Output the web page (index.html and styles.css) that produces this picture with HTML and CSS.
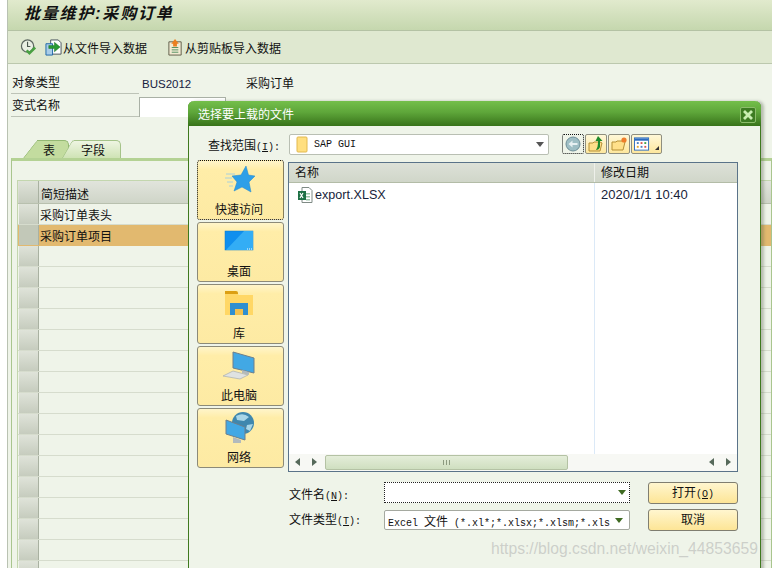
FILE: index.html
```html
<!DOCTYPE html>
<html lang="zh">
<head>
<meta charset="utf-8">
<title>批量维护:采购订单</title>
<link rel="stylesheet" href="styles.css">
</head>
<body>
<div class="app">
  <div class="titlebar">批量维护:采购订单</div>
  <div class="toolbar">
    <svg class="ico first" viewBox="0 0 18 18"><circle cx="8" cy="7.500" r="6.500" fill="#e9efe3" stroke="#5c6660" stroke-width="1.300"/><path d="M8 3v5h3" fill="none" stroke="#4c5750" stroke-width="1.200"/><path d="M7 12l3 3 6-6" fill="none" stroke="#4aa043" stroke-width="2.800"/></svg>
    <svg class="ico" viewBox="0 0 18 18"><path d="M6 1h8l3 3v12H6z" fill="#fff" stroke="#46525c"/><path d="M1 5h7v12H1z" fill="#a9cde8" stroke="#1f66a8"/><path d="M4 7h6V3.500l6 5-6 5V10H4z" fill="#2a9a35" stroke="#1c6e24" stroke-width=".5"/></svg>
    <span class="tool-label">从文件导入数据</span>
    <svg class="ico second" viewBox="0 0 18 18"><path d="M2 3h13v14H2z" fill="#f2ead2" stroke="#5f5c48"/><path d="M5 9h7M5 11.500h7M5 14h7" stroke="#4f8f5f"/><path d="M8.500 0l4 5h-2v3h-4V5h-2z" fill="#ea7f1f"/></svg>
    <span class="tool-label">从剪贴板导入数据</span>
  </div>
  <div class="fields">
    <div class="field-row">
      <span class="field-label underline">对象类型</span>
      <span class="field-code">BUS2012</span>
      <span class="field-text">采购订单</span>
    </div>
    <div class="field-row second-row">
      <span class="field-label underline">变式名称</span>
      <span class="field-input"></span>
    </div>
  </div>
  <div class="tabs">
    <span class="tab active">表</span>
    <span class="tab plain">字段</span>
  </div>
  <div class="tabpanel">
    <div class="grid">
      <div class="grow ghead"><span class="sel"></span><span class="cell">简短描述</span></div>
      <div class="grow"><span class="sel"></span><span class="cell tight">采购订单表头</span></div>
      <div class="grow picked"><span class="sel"></span><span class="cell tight">采购订单项目</span></div>
      <div class="grow"><span class="sel"></span><span class="cell"></span></div>
      <div class="grow"><span class="sel"></span><span class="cell"></span></div>
      <div class="grow"><span class="sel"></span><span class="cell"></span></div>
      <div class="grow"><span class="sel"></span><span class="cell"></span></div>
      <div class="grow"><span class="sel"></span><span class="cell"></span></div>
      <div class="grow"><span class="sel"></span><span class="cell"></span></div>
      <div class="grow"><span class="sel"></span><span class="cell"></span></div>
      <div class="grow"><span class="sel"></span><span class="cell"></span></div>
      <div class="grow"><span class="sel"></span><span class="cell"></span></div>
      <div class="grow"><span class="sel"></span><span class="cell"></span></div>
      <div class="grow"><span class="sel"></span><span class="cell"></span></div>
      <div class="grow"><span class="sel"></span><span class="cell"></span></div>
      <div class="grow"><span class="sel"></span><span class="cell"></span></div>
      <div class="grow"><span class="sel"></span><span class="cell"></span></div>
      <div class="grow"><span class="sel"></span><span class="cell"></span></div>
      <div class="grow"><span class="sel"></span><span class="cell"></span></div>
    </div>
  </div>
</div>

<section class="dialog">
  <header class="dlg-title">
    <span>选择要上载的文件</span>
    <span class="dlg-close"><svg viewBox="0 0 12 12"><path d="M2 2l8 8M10 2l-8 8" stroke="#c8eeb0" stroke-width="2.800"/></svg></span>
  </header>
  <div class="lookin">
    <span class="lookin-label">查找范围<span class="asc">(<u>I</u>):</span></span>
    <span class="lookin-box">
      <svg class="folder" viewBox="0 0 13 17"><path d="M1 2q0-1 1-1h8q1 0 1 1v13q0 1-1 1H2q-1 0-1-1z" fill="#ffdf80" stroke="#e2b94f"/></svg>
      <span class="mono">SAP GUI</span>
      <span class="arrow dark"></span>
    </span>
    <span class="nav-btns">
      <span class="nav focus"><svg viewBox="0 0 16 16"><circle cx="8" cy="8" r="7" fill="#9ebec4" stroke="#6f8f98"/><path d="M3.500 8l4-3.500V7h5v2h-5v2.500z" fill="#e7f0f2"/></svg></span>
      <span class="nav"><svg viewBox="0 0 16 16"><path d="M1 7h4l1-1h6l2 1-2 8H1z" fill="#ffe08a" stroke="#b58f35"/><path d="M10 0l4.500 5H12v6q-1 3-4 3 2-3 2-7V5H7.500z" fill="#1f8a2b"/></svg></span>
      <span class="nav"><svg viewBox="0 0 16 16"><path d="M1 6h4l1-1h6l2 1-2 8H1z" fill="#ffe08a" stroke="#b58f35"/><circle cx="13" cy="4" r="2.600" fill="#ef7d2a"/></svg></span>
      <span class="nav wide"><svg viewBox="0 0 17 16"><rect x=".5" y="1.500" width="15" height="13" fill="#fff" stroke="#2b6cc0"/><rect x="1" y="2" width="14" height="2.500" fill="#2b6cc0"/><path d="M3 6h2v2H3z" fill="#4a7fc0"/><path d="M7 6h2v2H7z" fill="#d9534f"/><path d="M11 6h2v2h-2z" fill="#46a046"/><path d="M3 10h2v2H3z" fill="#e3a92f"/><path d="M7 10h2v2H7z" fill="#4a7fc0"/><path d="M11 10h2v2h-2z" fill="#d9534f"/></svg><i class="corner"></i></span>
    </span>
  </div>
  <div class="dlg-main">
    <nav class="places">
      <div class="place focus">
        <svg viewBox="0 0 30 30"><path d="M1 9h9M0 13h7M2 17h6M4 21h4" stroke="#a8d0dc"/><path d="M21 1l2.500 9 6.500 1-6 6 2 10-9-5-8 4 3-9-5-6 9-1z" fill="#2e9fe8" stroke="#1d86cf" stroke-width=".5"/></svg>
        <span>快速访问</span>
      </div>
      <div class="place">
        <svg viewBox="0 0 30 30"><rect x="0" y="4" width="28" height="19" fill="#0f8fee" stroke="#0b78ca" stroke-width=".5"/><path d="M1 23L19 4h9v19z" fill="#33adf5"/><path d="M22 22h1M24 22h1M26 22h1" stroke="#fff"/></svg>
        <span>桌面</span>
      </div>
      <div class="place">
        <svg viewBox="0 0 30 30"><path d="M0 4h11l3 2h14v20H0z" fill="#ffd765"/><path d="M0 2h11q2 0 2 2v1H0z" fill="#dc9f12"/><path d="M5 26V14h18v12h-5v-6h-8v6z" fill="#2f8fd0"/><path d="M10 20h8v6h-8z" fill="#f3c14c"/></svg>
        <span>库</span>
      </div>
      <div class="place">
        <svg class="free" viewBox="0 0 30 30"><path d="M8 1l21 6v15L8 17z" fill="#42a8e4" stroke="#6d7f8c"/><path d="M17 19l7 2v3l-7-2z" fill="#b2babd"/><path d="M-2 25l10-5 15 4-8 4z" fill="#dfe2e2" stroke="#a8aeb0" stroke-width=".7"/></svg>
        <span>此电脑</span>
      </div>
      <div class="place">
        <svg class="free" viewBox="0 0 30 30"><circle cx="18" cy="10" r="11" fill="#3f87ae"/><path d="M11 3q7-4 13 1l-5 4-7-1zM22 12l6-1-3 7-4-2z" fill="#a9d6e8"/><path d="M1 7l19 7v13L1 21z" fill="#42a8e4" stroke="#6d7f8c"/><path d="M8 24l8 3v3H8z" fill="#b2babd"/></svg>
        <span>网络</span>
      </div>
    </nav>
    <div class="files">
      <div class="file-head">
        <span class="col-name">名称</span>
        <span class="col-date">修改日期</span>
      </div>
      <div class="file-body">
        <div class="file-row">
          <span class="col-name file-name">
            <svg class="xls" viewBox="0 0 16 16"><path d="M5 .5h7l3 3v12H5z" fill="#fff" stroke="#7f8a85"/><path d="M9 6h4v1.500H9zM9 9h4v1.500H9zM9 12h4v1.500H9z" fill="#9cc5a8"/><rect x="1" y="4" width="8" height="9" fill="#1e7145"/><path d="M3 6l3 5M6 6l-3 5" stroke="#fff" stroke-width="1.200"/></svg>
            export.XLSX
          </span>
          <span class="col-date file-date">2020/1/1 10:40</span>
        </div>
      </div>
      <div class="hscroll">
        <span class="sarrow left"></span>
        <span class="sarrow right"></span>
        <span class="thumb"><i></i></span>
        <span class="sarrow left end"></span>
        <span class="sarrow right"></span>
      </div>
    </div>
  </div>
  <div class="form">
    <div class="form-fields">
      <div class="form-row">
        <span class="form-label">文件名<span class="asc">(<u>N</u>):</span></span>
        <span class="combo dotted"><span class="arrow"></span></span>
      </div>
      <div class="form-row">
        <span class="form-label">文件类型<span class="asc">(<u>T</u>):</span></span>
        <span class="combo solid"><span class="mono">Excel <span class="cjk">文件</span> (*.xl*;*.xlsx;*.xlsm;*.xls</span><span class="arrow"></span></span>
      </div>
    </div>
    <div class="form-btns">
      <span class="btn">打开<span class="asc">(<u>O</u>)</span></span>
      <span class="btn">取消</span>
    </div>
  </div>
</section>
<div class="watermark">https://blog.csdn.net/weixin_44853659</div>
</body>
</html>
```
FILE: styles.css
```css
* { box-sizing: border-box; }
html, body { margin: 0; height: 100%; }
body {
  position: relative;
  width: 772px;
  height: 568px;
  overflow: hidden;
  background: #fff;
  font-family: "Liberation Sans", "Noto Sans CJK SC", sans-serif;
  font-size: 12px;
  color: #111;
}
.app {
  margin-left: 7px;
  height: 568px;
  overflow: hidden;
  background: #eff4e9;
  border-left: 1px solid #b9c2b2;
}
.titlebar {
  height: 31px;
  padding: 2px 0 0 16px;
  background: linear-gradient(#e1eacd, #c5d7ae);
  border-bottom: 1px solid #b4c2a4;
  font-size: 16px;
  line-height: 24px;
  font-weight: 700;
  font-style: italic;
  letter-spacing: 1.8px;
}
.toolbar {
  height: 33px;
  display: flex;
  align-items: center;
  padding: 0 0 0 12px;
  background: #dfe8d0;
  border-bottom: 1px solid #bcc8ae;
}
.ico { width: 17px; height: 17px; flex: none; }
.ico.first { margin-right: 8px; }
.ico.second { margin-left: 20px; }
.tool-label { font-size: 12px; margin-left: 1px; }
.fields { padding: 10px 0 0 3px; }
.field-row { display: flex; height: 21px; }
.second-row { height: 23px; padding-top: 2px; }
.field-label { width: 128px; padding-left: 1px; line-height: 18px; flex: none; }
.underline { border-bottom: 1px solid #bdc3b7; height: 20px; }
.field-code { width: 104px; margin-left: 3px; color: #16213f; flex: none; font-size: 11.500px; line-height: 20px; }
.field-text { line-height: 20px; }
.field-input { width: 87px; height: 20px; background: #fff; border: 1px solid #a9b0a5; border-bottom: 0; }
.tabs { display: flex; margin: 21px 0 0 15px; height: 19px; align-items: flex-end; }
.tab {
  position: relative;
  isolation: isolate;
  height: 18px;
  line-height: 23px;
}
.tab::before,
.tab::after {
  content: "";
  position: absolute;
  z-index: -1;
  top: 0;
  bottom: 0;
  border: 1px solid #a5c389;
  border-bottom: 0;
}
.tab::before {
  left: 7px;
  width: 16px;
  border-right: 0;
  transform: skewX(-38deg);
  border-radius: 3px 0 0 0;
}
.tab::after {
  left: 14px;
  right: 0;
  border-left: 0;
  border-radius: 0 5px 0 0;
}
.tab.active { width: 46px; padding-left: 20px; }
.tab.active::before, .tab.active::after { background: #c3dc9f; border-color: #93b873; }
.tab.plain { width: 52px; padding-left: 12px; }
.tab.plain::before, .tab.plain::after { background: linear-gradient(#eef5e2, #cfe3b5); }
.tab.plain::before { left: -2px; width: 14px; transform: skewX(-30deg); }
.tab.plain::after { left: 5px; }
.tabpanel {
  margin-left: 3px;
  height: 420px;
  padding: 19px 0 0 5px;
  border: 1px solid #a9c58e;
  border-top: 3px solid #b4d294;
  background: #eff4e9;
}
.grid { border-top: 1px solid #c3d6ae; border-left: 1px solid #c3d6ae; }
.grow { display: flex; height: 21px; border-bottom: 1px solid #d6dccd; }
.ghead { height: 23px; background: linear-gradient(#e1e4dc, #cfd5c8); border-bottom: 1px solid #b8c0ae; }
.sel {
  width: 20px;
  margin-left: 1px;
  flex: none;
  background: linear-gradient(#dfe3d9, #c6ccbe);
  border-right: 1px solid #a9b1a1;
}
.cell { padding-left: 2px; line-height: 25px; white-space: nowrap; flex: 1; }
.ghead .cell { line-height: 29px; }
.cell.tight { padding-left: 1px; }
.picked { background: #e2b96f; border-bottom-color: #e2b96f; }
.picked .sel { background: #c2c8b8; }

.dialog {
  position: absolute;
  left: 188px;
  top: 101px;
  width: 573px;
  height: 480px;
  background: #eff4e9;
  border: 1px solid #3f7a1e;
  border-top: 0;
  border-radius: 6px 6px 0 0;
  box-shadow: 3px 0 3px rgba(80, 90, 70, .35);
}
.dlg-title {
  height: 25px;
  margin: 0 -1px;
  padding: 0 5px 0 10px;
  display: flex;
  justify-content: space-between;
  align-items: center;
  border-radius: 6px 6px 0 0;
  background: linear-gradient(#74bf4b, #5ea63a 45%, #38731a);
  color: #fff;
  font-size: 12px;
}
.dlg-close {
  width: 16px;
  height: 16px;
  margin-top: 3px;
  padding: 1px;
  display: flex;
  background: #3d7c22;
  border: 1px solid #8cbd6b;
  border-radius: 2px;
}
.asc { font-family: "Liberation Mono", monospace; font-size: 10px; }
.cjk { font-family: "Noto Sans CJK SC", sans-serif; font-size: 12px; }
.lookin { display: flex; align-items: center; height: 22px; margin-top: 7px; padding-left: 19px; }
.lookin-label { width: 81px; font-size: 12px; white-space: nowrap; }
.lookin-box {
  width: 260px;
  height: 21px;
  display: flex;
  align-items: center;
  padding: 0 4px 0 6px;
  background: #fff;
  border: 1px solid #b9bfb3;
  border-radius: 2px;
}
.folder { width: 13px; height: 17px; flex: none; margin-right: 5px; }
.mono { font-family: "Liberation Mono", "Noto Sans CJK SC", monospace; font-size: 10px; white-space: nowrap; flex: 1; overflow: hidden; }
.arrow { width: 0; height: 0; flex: none; border-left: 4px solid transparent; border-right: 4px solid transparent; border-top: 5px solid #3f6a22; }
.arrow.dark { border-top-color: #555; }
.nav-btns { display: flex; gap: 1px; margin-left: 13px; }
.nav {
  width: 22px;
  height: 20px;
  padding: 1px 2px;
  display: flex;
  align-items: center;
  background: linear-gradient(#fff8d8, #fde79e);
  border: 1px solid #8f8f7f;
  border-radius: 2px;
  position: relative;
}
.nav svg { width: 16px; height: 16px; flex: none; }
.nav.focus { background: #eff4e9; border: 1px dotted #111; }
.nav.wide { width: 31px; }
.corner { position: absolute; right: 2px; bottom: 3px; border-left: 4px solid transparent; border-bottom: 4px solid #333; }
.dlg-main { display: flex; margin-top: 7px; padding-left: 8px; height: 310px; }
.places { width: 87px; display: flex; flex-direction: column; gap: 2px; margin-top: -2px; }
.place {
  width: 87px;
  height: 60px;
  flex: none;
  display: flex;
  flex-direction: column;
  align-items: center;
  justify-content: flex-end;
  padding: 0 3px 1px 0;
  background: linear-gradient(#fff5ca, #ffeda8 15%, #fdeaa3);
  border: 1px solid #8c8a78;
  border-radius: 3px;
  line-height: 16px;
  position: relative;
}
.place svg { position: absolute; left: 27px; top: 4px; width: 30px; height: 30px; overflow: visible; }
.place.focus { border: 1px dotted #111; }
.files {
  width: 450px;
  margin-left: 4px;
  background: #fff;
  border: 1px solid #5a7389;
  display: flex;
  flex-direction: column;
}
.file-head { display: flex; height: 20px; line-height: 21px; background: linear-gradient(#dde1d8, #d0d6c9); border-bottom: 1px solid #b3bca7; }
.col-name { width: 305px; padding-left: 6px; flex: none; }
.col-date { padding-left: 6px; flex: 1; }
.file-head .col-date { border-left: 1px solid #eef0ea; }
.file-body { flex: 1; background: linear-gradient(90deg, #fff 305px, #dbe9f7 305px, #dbe9f7 306px, #fff 306px); }
.file-row { display: flex; height: 23px; align-items: center; font-size: 12.600px; color: #17233a; }
.file-name { display: flex; align-items: center; gap: 2px; padding-left: 8px; }
.file-date { font-size: 13px; padding-left: 7px; }
.xls { width: 16px; height: 16px; }
.hscroll { height: 17px; display: flex; align-items: center; background: #f7f8f4; padding-left: 2px; }
.sarrow { width: 16px; height: 17px; flex: none; position: relative; }
.sarrow::after { content: ""; position: absolute; top: 4px; border-top: 4px solid transparent; border-bottom: 4px solid transparent; }
.sarrow.left::after { left: 4px; border-right: 5px solid #56695a; }
.sarrow.right::after { left: 5px; border-left: 5px solid #56695a; }
.sarrow.end { margin-left: auto; }
.thumb {
  width: 243px;
  height: 15px;
  margin-left: 2px;
  background: linear-gradient(#e4edd9, #cfdfc0);
  border: 1px solid #b4c2a4;
  border-radius: 2px;
  display: flex;
  justify-content: center;
  align-items: center;
}
.thumb i { width: 8px; height: 5px; background: repeating-linear-gradient(90deg, #8c9a80 0 1px, transparent 1px 3px); }
.form { display: flex; margin-top: 10px; padding-left: 100px; }
.form-fields { width: 359px; display: flex; flex-direction: column; gap: 7px; }
.form-row { display: flex; align-items: center; height: 21px; }
.form-row + .form-row { height: 20px; }
.form-label { width: 95px; padding-top: 6px; white-space: nowrap; font-size: 12px; line-height: 18px; }
.form-row + .form-row .form-label { padding-top: 2px; }
.combo {
  width: 246px;
  height: 100%;
  display: flex;
  align-items: center;
  justify-content: flex-end;
  background: #fff;
}
.combo.dotted { border: 1px dotted #222; padding: 0 3px; }
.combo.solid { border: 1px solid #a5a9a0; border-radius: 2px; padding: 0 6px 0 3px; }
.form-btns { display: flex; flex-direction: column; gap: 5px; }
.btn {
  width: 90px;
  height: 22px;
  text-align: center;
  line-height: 20px;
  background: linear-gradient(#fff6cf, #fde596);
  border: 1px solid #807e70;
  border-radius: 3px;
}
.watermark {
  position: absolute;
  left: 491px;
  top: 540px;
  font-size: 15.700px;
  line-height: 18px;
  color: rgba(170, 170, 170, .5);
  white-space: nowrap;
}
```
